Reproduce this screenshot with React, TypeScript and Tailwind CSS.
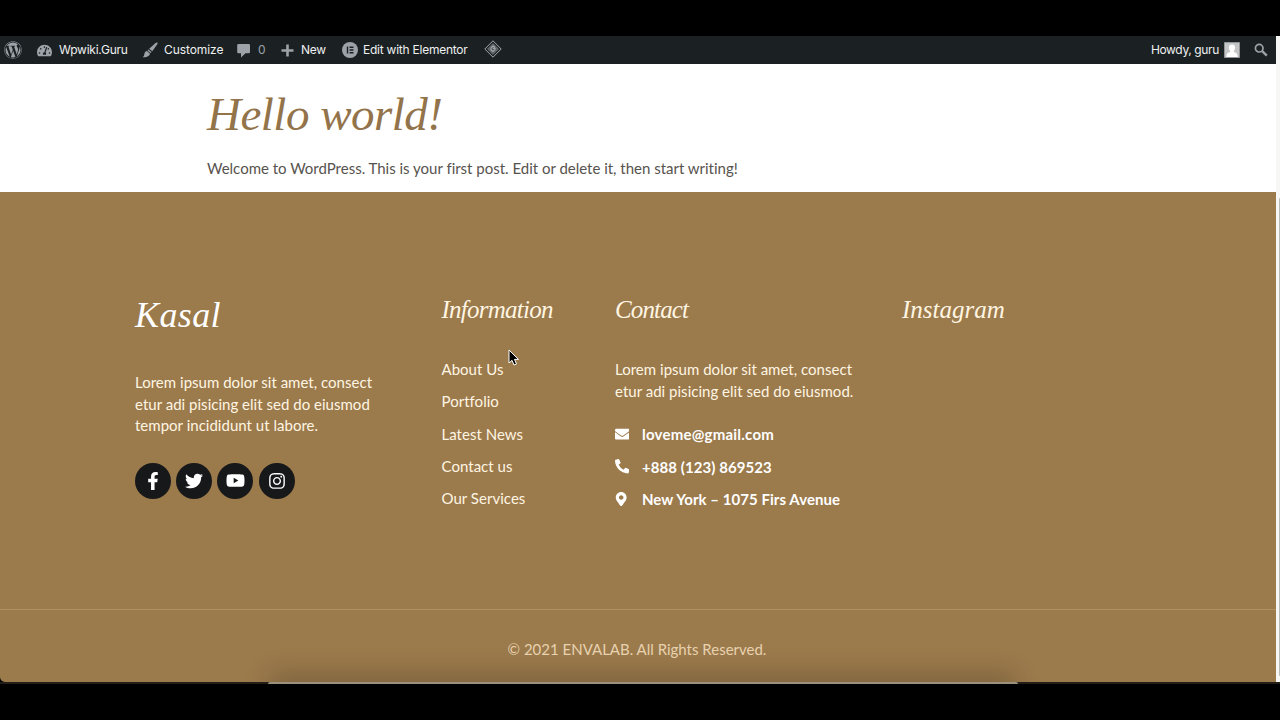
import { FaEnvelope, FaFacebookF, FaInstagram, FaMapMarkerAlt, FaPhoneAlt, FaTachometerAlt, FaTwitter, FaWordpress, FaYoutube } from "react-icons/fa";

const script = "font-['Liberation_Serif',serif] italic font-normal whitespace-nowrap";

const links = ["About Us", "Portfolio", "Latest News", "Contact us", "Our Services"];

const socials = [
    { name: "Facebook", Icon: FaFacebookF, size: 18 },
    { name: "Twitter", Icon: FaTwitter, size: 18 },
    { name: "YouTube", Icon: FaYoutube, size: 19 },
    { name: "Instagram", Icon: FaInstagram, size: 18 },
];

const contacts = [
    { text: "loveme@gmail.com", Icon: FaEnvelope, tracking: "tracking-[0.22px]", iconClass: "" },
    { text: "+888 (123) 869523", Icon: FaPhoneAlt, tracking: "tracking-[0.07px]", iconClass: "" },
    { text: "New York – 1075 Firs Avenue", Icon: FaMapMarkerAlt, tracking: "tracking-[0.05px]", iconClass: "-ml-[1.500px]" },
];

function AdminBar() {
    return (
        <header className="flex h-7 w-[1276px] items-center bg-[#1b2123] font-['Inter',sans-serif] text-[12px] tracking-[-0.24px] text-[#eef0f0]">
            <FaWordpress size={18} className="ml-[4px] shrink-0 text-[#9ca2a7]" />
            <a className="ml-[15px] flex w-[105px] shrink-0 items-center gap-[7px]">
                <FaTachometerAlt size={15} className="text-[#9ca2a7]" />
                <span>Wpwiki.Guru</span>
            </a>
            <a className="flex w-[95px] shrink-0 items-center gap-[6px]">
                <svg width="16" height="16" viewBox="0 0 16 16" fill="#9ca2a7">
                    <path d="M15.300.6c.6.500.2 1.300-.2 2L10.300 9.200 7.200 6.700 13.300 1.200c.7-.6 1.400-1.100 2-.6z" />
                    <path d="M6.400 7.500 9.500 10 8.600 11 5.500 8.400z" />
                    <path d="M4.900 9.100 7.900 11.600c-.2 3-3.700 4-7.400 3.700 1.700-.8 1.500-2.100 2-3.800.3-1.300 1.200-2.200 2.400-2.400z" />
                </svg>
                <span className="tracking-[-0.08px]">Customize</span>
            </a>
            <a className="flex w-[44px] shrink-0 items-center gap-[8px] text-[#9ca2a7]">
                <svg width="13" height="15" viewBox="0 0 13 15" fill="currentColor">
                    <path d="M1.500 1h10A1.300 1.300 0 0 1 13 2.300V9a1.300 1.300 0 0 1-1.300 1.300H8.500L4 14.500v-4.200H1.500A1.300 1.300 0 0 1 .2 9V2.300A1.300 1.300 0 0 1 1.500 1z" />
                </svg>
                <span>0</span>
            </a>
            <a className="flex w-[61px] shrink-0 items-center gap-[7px]">
                <svg width="13" height="13" viewBox="0 0 13 13" className="text-[#9ca2a7]">
                    <path d="M6.500 0.500v12M0.500 6.500h12" stroke="currentColor" strokeWidth="2.600" />
                </svg>
                <span>New</span>
            </a>
            <a className="flex w-[142px] shrink-0 items-center gap-[5px]">
                <svg width="16" height="16" viewBox="0 0 16 16">
                    <circle cx="8" cy="8" r="8" fill="#9ca2a7" />
                    <path d="M5.500 4.500v7M7.500 5.250h4M7.500 8h4M7.500 10.750h4" stroke="#1b2123" strokeWidth="1.400" />
                </svg>
                <span>Edit with Elementor</span>
            </a>
            <svg width="18" height="18" viewBox="0 0 18 18" fill="none" stroke="#a4a9ac" className="-mt-[2px] shrink-0">
                <path d="M9 .8 17.200 9 9 17.200.8 9z" strokeWidth="1" />
                <path d="M9 3.600 14.400 9 9 14.400 3.600 9z" fill="#565c5f" stroke="#7b8184" strokeWidth=".8" />
                <path d="M11 7.200 9 6 7 8v2l2 1.500 2-1.700V8.400H9" strokeWidth="1.100" />
            </svg>
            <span className="ml-auto mr-[5px] tracking-[-0.36px]">Howdy, guru</span>
            <svg width="16" height="16" viewBox="0 0 16 16" className="-mt-[1px] shrink-0">
                <path fill="#c3c5c7" stroke="#929699" d="M.5.5h15v15H.5z" />
                <path fill="#fff" d="M8 2.500c2.200 0 3.300 1.500 3.100 3.500-.1 1.300-.6 2.300-1.300 3v1c2.500.7 3.700 1.700 4 5H2.200c.3-3.300 1.500-4.300 4-5V9c-.7-.7-1.200-1.700-1.300-3C4.700 4 5.800 2.500 8 2.500z" />
            </svg>
            <svg width="14" height="14" viewBox="0 0 14 14" fill="none" stroke="#9ca2a7" className="ml-[14px] mr-[8px] shrink-0">
                <circle cx="5.200" cy="5.200" r="3.800" strokeWidth="1.700" />
                <path d="m8.200 8.200 4.600 4.400" strokeWidth="2.400" />
            </svg>
        </header>
    );
}

function Footer() {
    return (
        <footer className="flex h-[489.500px] w-[1276px] flex-col overflow-hidden rounded-bl-[5px] bg-[#9b7a4c] text-[#fff5e2]">
            <div className="grid h-[416.500px] shrink-0 grid-cols-[306.500px_173.500px_287px_1fr] pl-[135px] pt-[102px]">
                <div>
                    <h2 className={`${script} h-[78px] text-[36px] leading-[43px] tracking-[0.4px] text-white`}>Kasal</h2>
                    <p className="whitespace-nowrap leading-[21.600px] tracking-[0.02px]">
                        Lorem ipsum dolor sit amet, consect<br />
                        etur adi pisicing elit sed do eiusmod<br />
                        tempor incididunt ut labore.
                    </p>
                    <div className="mt-[26px] flex gap-[5.200px]">
                        {socials.map(({ name, Icon, size }) => (
                            <a key={name} aria-label={name} className="flex size-9 items-center justify-center rounded-full bg-[#171819] text-white">
                                <Icon size={size} />
                            </a>
                        ))}
                    </div>
                </div>
                <div>
                    <h3 className={`${script} h-[64px] text-[25px] leading-[32px] tracking-[-0.75px]`}>Information</h3>
                    <ul className="flex flex-col gap-[10.300px]">
                        {links.map((link) => (
                            <li key={link} className="leading-[22px] tracking-[0.03px]">{link}</li>
                        ))}
                    </ul>
                </div>
                <div>
                    <h3 className={`${script} h-[65px] text-[25px] leading-[32px] tracking-[-0.85px]`}>Contact</h3>
                    <p className="whitespace-nowrap leading-[21.600px] tracking-[0.02px]">
                        Lorem ipsum dolor sit amet, consect<br />
                        etur adi pisicing elit sed do eiusmod.
                    </p>
                    <ul className="mt-[21px] flex flex-col gap-[10.400px] font-bold text-white">
                        {contacts.map(({ text, Icon, tracking, iconClass }) => (
                            <li key={text} className="flex items-center leading-[22px]">
                                <span className="w-[27px]"><Icon size={14.400} className={iconClass} /></span>
                                <span className={`whitespace-nowrap ${tracking}`}>{text}</span>
                            </li>
                        ))}
                    </ul>
                </div>
                <h3 className={`${script} text-[25px] leading-[32px]`}>Instagram</h3>
            </div>
            <div className="relative flex h-[73px] justify-center border-t border-[#b18f63] pt-[28px] text-[#e8d1af]">
                <div className="absolute bottom-[-16px] left-[270px] h-[24px] w-[744px] bg-black/20 blur-[12px]" />
                <p className="relative -left-[1px] leading-[22px]">© 2021 ENVALAB. All Rights Reserved.</p>
            </div>
        </footer>
    );
}

export default function App() {
    return (
        <div className="relative flex h-[720px] w-[1280px] flex-col overflow-hidden bg-black pt-9 font-['Lato',sans-serif] text-[15px]">
            <div className="flex h-[646px]">
                <div className="w-[1276px] shrink-0 bg-black">
                    <AdminBar />
                    <main className="h-32 bg-white pl-[207px] pt-[22px]">
                        <h1 className={`${script} h-[71px] text-[47px] leading-[57px] tracking-[-0.5px] text-[#93734a]`}>Hello world!</h1>
                        <p className="leading-[22px] tracking-[-0.01px] text-[#57534e]">Welcome to WordPress. This is your first post. Edit or delete it, then start writing!</p>
                    </main>
                    <Footer />
                </div>
                <div className="flex w-1 flex-col bg-[#f7f7f5] pl-[3px] pt-[162px]">
                    <div className="h-[478px] rounded-l-full bg-[#b9b9b7]" />
                </div>
            </div>
            <div className="h-[2px] shrink-0 bg-[#231e17]">
                <div className="ml-[268px] h-[2px] w-[750px] rounded-t-full bg-[#99917d]" />
            </div>
            {/* mouse pointer */}
            <svg width="12" height="18" viewBox="0 0 12 18" className="absolute left-[508px] top-[349px]">
                <path d="M1 1v13l3-2.700 2 4.700 2.500-1L6.500 10.400h4z" fill="#000" stroke="#fff" strokeWidth="1" />
            </svg>
        </div>
    );
}
